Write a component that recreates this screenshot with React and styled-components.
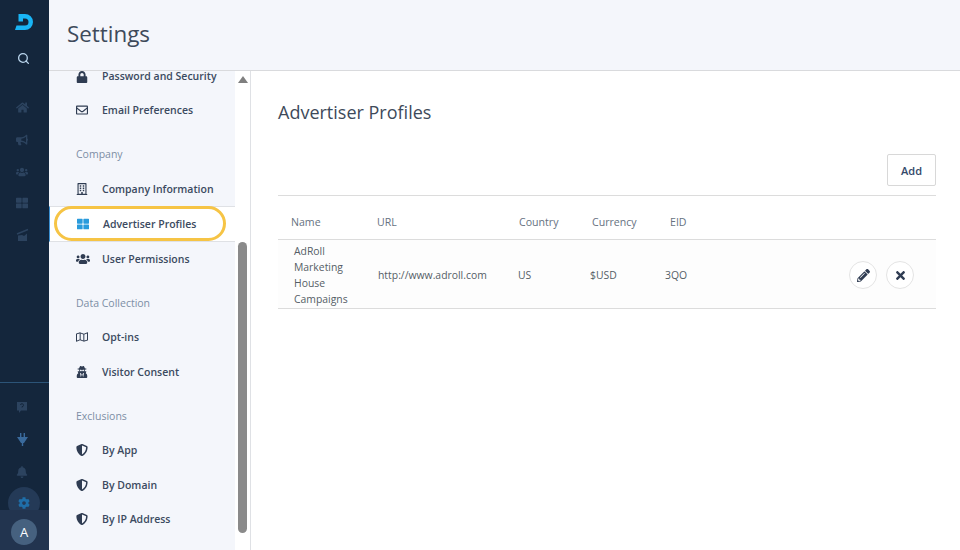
import styled, { createGlobalStyle } from "styled-components";
import { Search } from "lucide-react";
import {
  FaBell,
  FaBullhorn,
  FaCog,
  FaHome,
  FaLock,
  FaPencilAlt,
  FaRegBuilding,
  FaRegEnvelope,
  FaRegMap,
  FaShieldAlt,
  FaThLarge,
  FaTimes,
  FaUsers,
  FaUserSecret,
} from "react-icons/fa";

const GlobalStyle = createGlobalStyle`
  html, body {
    margin: 0;
    width: 960px;
    height: 550px;
    overflow: hidden;
    background: #fff;
    font-family: "Open Sans", "Liberation Sans", sans-serif;
  }
`;

const Logo = () => (
  <svg width="18" height="16" viewBox="0 0 18 16">
    <path
      d="M3.5 0 H10 A8 8 0 0 1 10 16 H0 L1.5 11.5 H10 A3.5 3.5 0 0 0 10 4.5 H8 V7.5 H3.5 Z"
      fill="#19b5f6"
    />
  </svg>
);

const ChartIcon = () => (
  <svg width="13" height="13" viewBox="0 0 13 13">
    <path d="M1 6 L12 1.5" stroke="#2c435f" strokeWidth="1.4" fill="none" />
    <path d="M2 7.5 L6 7 L8 8 L11 5.5 V13 H2 Z" fill="#2c435f" />
  </svg>
);

const HelpIcon = () => (
  <svg width="12" height="13" viewBox="0 0 12 13">
    <path d="M1 1 H11 V9.5 H5 L3 12 V9.5 H1 Z" fill="#2c435f" />
    <path d="M4.5 4 A1.5 1.5 0 1 1 6 5.7 V6.5" stroke="#14263c" strokeWidth="1" fill="none" />
  </svg>
);

const PlugGlyph = () => (
  <svg width="11" height="13" viewBox="0 0 11 13">
    <path d="M3 0 H4.4 V4 H3 Z M6.6 0 H8 V4 H6.6 Z" fill="#3a6a9c" />
    <path d="M0 4 H11 L7 10 H6.2 V13 H4.8 V10 H4 Z" fill="#3a6a9c" />
  </svg>
);

const topIcons = [
  { icon: <FaHome size={13} />, top: 35 },
  { icon: <FaBullhorn size={12} />, top: 19 },
  { icon: <FaUsers size={12} />, top: 19 },
  { icon: <FaThLarge size={12} />, top: 18 },
  { icon: <ChartIcon />, top: 19 },
];

const sections = [
  {
    items: [
      { label: "Password and Security", icon: <FaLock /> },
      { label: "Email Preferences", icon: <FaRegEnvelope /> },
    ],
  },
  {
    title: "Company",
    items: [
      { label: "Company Information", icon: <FaRegBuilding /> },
      { label: "Advertiser Profiles", icon: <FaThLarge />, active: true },
      { label: "User Permissions", icon: <FaUsers size={14} /> },
    ],
  },
  {
    title: "Data Collection",
    items: [
      { label: "Opt-ins", icon: <FaRegMap /> },
      { label: "Visitor Consent", icon: <FaUserSecret /> },
    ],
  },
  {
    title: "Exclusions",
    items: [
      { label: "By App", icon: <FaShieldAlt /> },
      { label: "By Domain", icon: <FaShieldAlt /> },
      { label: "By IP Address", icon: <FaShieldAlt /> },
    ],
  },
];

const columns = ["Name", "URL", "Country", "Currency", "EID"];

export default function App() {
  return (
    <>
      <GlobalStyle />
      <Page>
        <Rail>
          <RailTop>
            <LogoSlot>
              <Logo />
            </LogoSlot>
            <SearchSlot>
              <Search size={13} strokeWidth={2.4} />
            </SearchSlot>
            {topIcons.map((item, i) => (
              <RailIcon key={i} $top={item.top}>
                {item.icon}
              </RailIcon>
            ))}
          </RailTop>
          <RailBottom>
            <RailIcon $top={18}>
              <HelpIcon />
            </RailIcon>
            <RailIcon $top={19}>
              <PlugGlyph />
            </RailIcon>
            <RailIcon $top={19}>
              <FaBell size={12} />
            </RailIcon>
            <ActiveCircle>
              <FaCog size={12} />
            </ActiveCircle>
            <AvatarBar>
              <Avatar>A</Avatar>
            </AvatarBar>
          </RailBottom>
        </Rail>
        <Content>
          <Header>
            <Title>Settings</Title>
          </Header>
          <Body>
            <SideNav>
              <NavScroll>
                {sections.map((section, i) => (
                  <NavGroup key={i}>
                    {section.title && <GroupTitle>{section.title}</GroupTitle>}
                    {section.items.map((item) => (
                      <NavRow key={item.label} $active={item.active}>
                        <NavIcon $active={item.active}>{item.icon}</NavIcon>
                        {item.label}
                        {item.active && <Highlight />}
                      </NavRow>
                    ))}
                  </NavGroup>
                ))}
              </NavScroll>
              <ScrollBar>
                <ArrowUp />
                <Thumb />
              </ScrollBar>
            </SideNav>
            <Main>
              <PageTitle>Advertiser Profiles</PageTitle>
              <Toolbar>
                <AddButton>Add</AddButton>
              </Toolbar>
              <HeadRow>
                {columns.map((col) => (
                  <HeadCell key={col}>{col}</HeadCell>
                ))}
              </HeadRow>
              <DataRow>
                <NameCell>AdRoll Marketing House Campaigns</NameCell>
                <div>http://www.adroll.com</div>
                <div>US</div>
                <div>$USD</div>
                <div>3QO</div>
                <Actions>
                  <RoundButton>
                    <FaPencilAlt size={13} />
                  </RoundButton>
                  <RoundButton>
                    <FaTimes size={13} />
                  </RoundButton>
                </Actions>
              </DataRow>
            </Main>
          </Body>
        </Content>
      </Page>
    </>
  );
}

const Page = styled.div`
  display: flex;
  width: 960px;
  height: 550px;
  overflow: hidden;
`;

const Rail = styled.aside`
  width: 49px;
  flex: none;
  background: #14263c;
  display: flex;
  flex-direction: column;
  justify-content: space-between;
`;

const RailTop = styled.div`
  display: flex;
  flex-direction: column;
  align-items: flex-start;
`;

const LogoSlot = styled.div`
  margin-top: 14px;
  height: 16px;
  width: 47px;
  display: flex;
  justify-content: center;
`;

const SearchSlot = styled.div`
  margin-top: 22px;
  height: 14px;
  width: 47px;
  color: #b9d4ec;
  display: flex;
  justify-content: center;
`;

const RailIcon = styled.div`
  margin-top: ${(p) => p.$top}px;
  width: 44px;
  height: 13px;
  flex: none;
  color: #2c435f;
  display: flex;
  align-items: center;
  justify-content: center;
`;

const RailBottom = styled.div`
  border-top: 1px solid #2c5478;
  height: 167px;
  display: flex;
  flex-direction: column;
  align-items: flex-start;
`;

const ActiveCircle = styled.div`
  margin: 9px 0 0 8px;
  width: 32px;
  height: 32px;
  flex: none;
  border-radius: 50%;
  background: #243a57;
  color: #1f6ea8;
  display: flex;
  align-items: center;
  justify-content: center;
`;

const AvatarBar = styled.div`
  position: relative;
  margin-top: -9px;
  width: 49px;
  height: 40px;
  flex: none;
  box-sizing: border-box;
  padding: 4px 1px 0 0;
  background: #22344f;
  display: flex;
  align-items: center;
  justify-content: center;
`;

const Avatar = styled.div`
  width: 26px;
  height: 26px;
  border-radius: 50%;
  background: #46617f;
  color: #fff;
  font-size: 13px;
  display: flex;
  align-items: center;
  justify-content: center;
`;

const Content = styled.div`
  flex: 1;
  min-width: 0;
  display: flex;
  flex-direction: column;
`;

const Header = styled.header`
  height: 70px;
  flex: none;
  background: #f4f6fb;
  border-bottom: 1px solid #d9dadd;
  display: flex;
  align-items: center;
  padding-left: 18px;
`;

const Title = styled.h1`
  margin: 0 0 3px;
  font-size: 22.4px;
  font-weight: 400;
  color: #3e4a5a;
`;

const Body = styled.div`
  flex: 1;
  min-height: 0;
  display: flex;
`;

const SideNav = styled.nav`
  width: 201px;
  flex: none;
  display: flex;
  border-right: 1px solid #dfe1e5;
`;

const NavScroll = styled.div`
  width: 186px;
  flex: none;
  background: #f4f6fb;
`;

const NavGroup = styled.div`
  /* the list is scrolled a little, only the lower part of the first row shows */
  &:first-child > div:first-child {
    height: 22px;
    align-items: flex-start;
    line-height: 11px;
  }
`;

const GroupTitle = styled.div`
  height: 43.75px;
  padding: 17.5px 0 0 27px;
  box-sizing: border-box;
  font-size: 10.5px;
  line-height: 18px;
  color: #7d8ea5;
`;

const NavRow = styled.div`
  position: relative;
  height: 34.5px;
  display: flex;
  align-items: center;
  box-sizing: border-box;
  padding-left: 27px;
  font-size: 10.5px;
  font-weight: 600;
  color: #3b4a60;
  ${(p) =>
    p.$active &&
    `
    height: 36px;
    background: #fff;
    border-top: 1px solid #dfe1e5;
    border-bottom: 1px solid #dfe1e5;
    border-left: 1px solid #3a8fd0;
  `}
`;

const NavIcon = styled.span`
  width: 26px;
  flex: none;
  display: flex;
  align-items: center;
  font-size: 12px;
  color: ${(p) => (p.$active ? "#2a9bdc" : "#2f3c52")};
`;

const Highlight = styled.span`
  position: absolute;
  left: 4px;
  top: -1px;
  width: 172px;
  height: 35px;
  box-sizing: border-box;
  border: 3px solid #f6c445;
  border-radius: 18px;
`;

const ScrollBar = styled.div`
  width: 15px;
  flex: none;
  display: flex;
  flex-direction: column;
  align-items: center;
  background: #fff;
`;

const ArrowUp = styled.div`
  margin-top: 5px;
  width: 0;
  height: 0;
  border-left: 5px solid transparent;
  border-right: 5px solid transparent;
  border-bottom: 7px solid #7f7f7f;
`;

const Thumb = styled.div`
  margin-top: 159px;
  width: 9px;
  height: 291px;
  border-radius: 5px;
  background: #8a8a8a;
`;

const Main = styled.main`
  flex: 1;
  min-width: 0;
  padding: 0 24px 0 27px;
`;

const PageTitle = styled.h2`
  margin: 28px 0 0;
  height: 26px;
  font-size: 18px;
  line-height: 26px;
  font-weight: 400;
  color: #3e4a5a;
`;

const Toolbar = styled.div`
  display: flex;
  justify-content: flex-end;
  margin-top: 29px;
  padding-bottom: 9px;
  border-bottom: 1px solid #dcdcdc;
`;

const AddButton = styled.button`
  width: 49px;
  height: 32px;
  padding: 0;
  background: #fff;
  border: 1px solid #d8d8d8;
  border-radius: 2px;
  font-family: inherit;
  font-size: 11px;
  font-weight: 600;
  color: #34486a;
`;

const HeadRow = styled.div`
  height: 44px;
  box-sizing: border-box;
  padding: 8px 0 0 13px;
  display: grid;
  grid-template-columns: 86px 142px 73px 78px 1fr;
  align-items: center;
  border-bottom: 1px solid #dcdcdc;
`;

const HeadCell = styled.div`
  font-size: 10.6px;
  color: #66727f;
`;

const DataRow = styled.div`
  height: 69px;
  box-sizing: border-box;
  padding: 2px 22px 0 16px;
  display: grid;
  grid-template-columns: 84px 140px 72px 75px 1fr auto;
  align-items: center;
  background: #fdfdfd;
  border-bottom: 1px solid #dcdcdc;
  font-size: 10.4px;
  line-height: 16px;
  color: #555d66;
`;

const NameCell = styled.div`
  width: 62px;
`;

const Actions = styled.div`
  display: flex;
  gap: 9px;
`;

const RoundButton = styled.button`
  width: 28px;
  height: 28px;
  padding: 0;
  border: 1px solid #e4e4e4;
  border-radius: 50%;
  background: #fff;
  color: #2f3c52;
  display: flex;
  align-items: center;
  justify-content: center;
`;
